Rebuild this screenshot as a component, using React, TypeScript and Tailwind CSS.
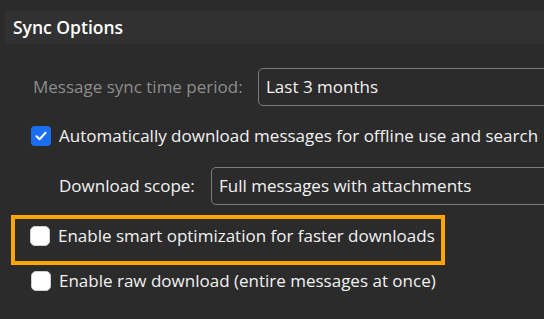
import React from "react";

function Check({ checked }: { checked: boolean }) {
  return checked ? (
    <div className="w-5 h-5 rounded-[4px] bg-[#1a6ff0] flex items-center justify-center shrink-0">
      <svg width="14" height="14" viewBox="0 0 14 14" fill="none">
        <path d="M2.5 7.3 L5.6 10.2 L11.5 3.8" stroke="white" strokeWidth="2" strokeLinecap="round" strokeLinejoin="round" />
      </svg>
    </div>
  ) : (
    <div className="w-5 h-5 rounded-[5px] bg-white border border-[#cfcfcf] shrink-0" />
  );
}

export default function App() {
  return (
    <div
      className="w-[544px] h-[319px] overflow-hidden bg-[#2b2b2b] text-[#f2f2f2] pt-[11px] pl-[5px]"
      style={{ fontFamily: '"Open Sans", "Noto Sans", sans-serif' }}
    >
      <div className="h-[33px] bg-[#313131] flex items-center pl-2 text-[17.5px] font-semibold text-white">
        Sync Options
      </div>
      <div className="flex flex-col text-[17px] whitespace-nowrap">
        <div className="flex items-center mt-[24px] h-[38px]">
          <span className="ml-[28px] w-[225px] shrink-0 text-[#8d8d8d]">Message sync time period:</span>
          <div className="w-[400px] h-[38px] border border-[#7c7c7c] rounded-[5px] flex items-center pl-[7px] shrink-0">
            Last 3 months
          </div>
        </div>
        <div className="flex items-center gap-2 ml-[26px] mt-[11px] h-[38px]">
          <Check checked />
          <span>Automatically download messages for offline use and search</span>
        </div>
        <div className="flex items-center mt-[12px] h-[38px]">
          <span className="ml-[54px] w-[152px] shrink-0">Download scope:</span>
          <div className="w-[400px] h-[38px] border border-[#7c7c7c] rounded-[5px] flex items-center pl-[7px] shrink-0">
            Full messages with attachments
          </div>
        </div>
        <div className="ml-[6px] mt-[10px] w-[434px] h-[50px] border-4 border-[#ffa500] flex items-center pl-[15px] pb-[8px] gap-2 shrink-0">
          <Check checked={false} />
          <span>Enable smart optimization for faster downloads</span>
        </div>
        <div className="flex items-center gap-2 ml-[26px] mt-[6px] h-[20px]">
          <Check checked={false} />
          <span>Enable raw download (entire messages at once)</span>
        </div>
      </div>
    </div>
  );
}
